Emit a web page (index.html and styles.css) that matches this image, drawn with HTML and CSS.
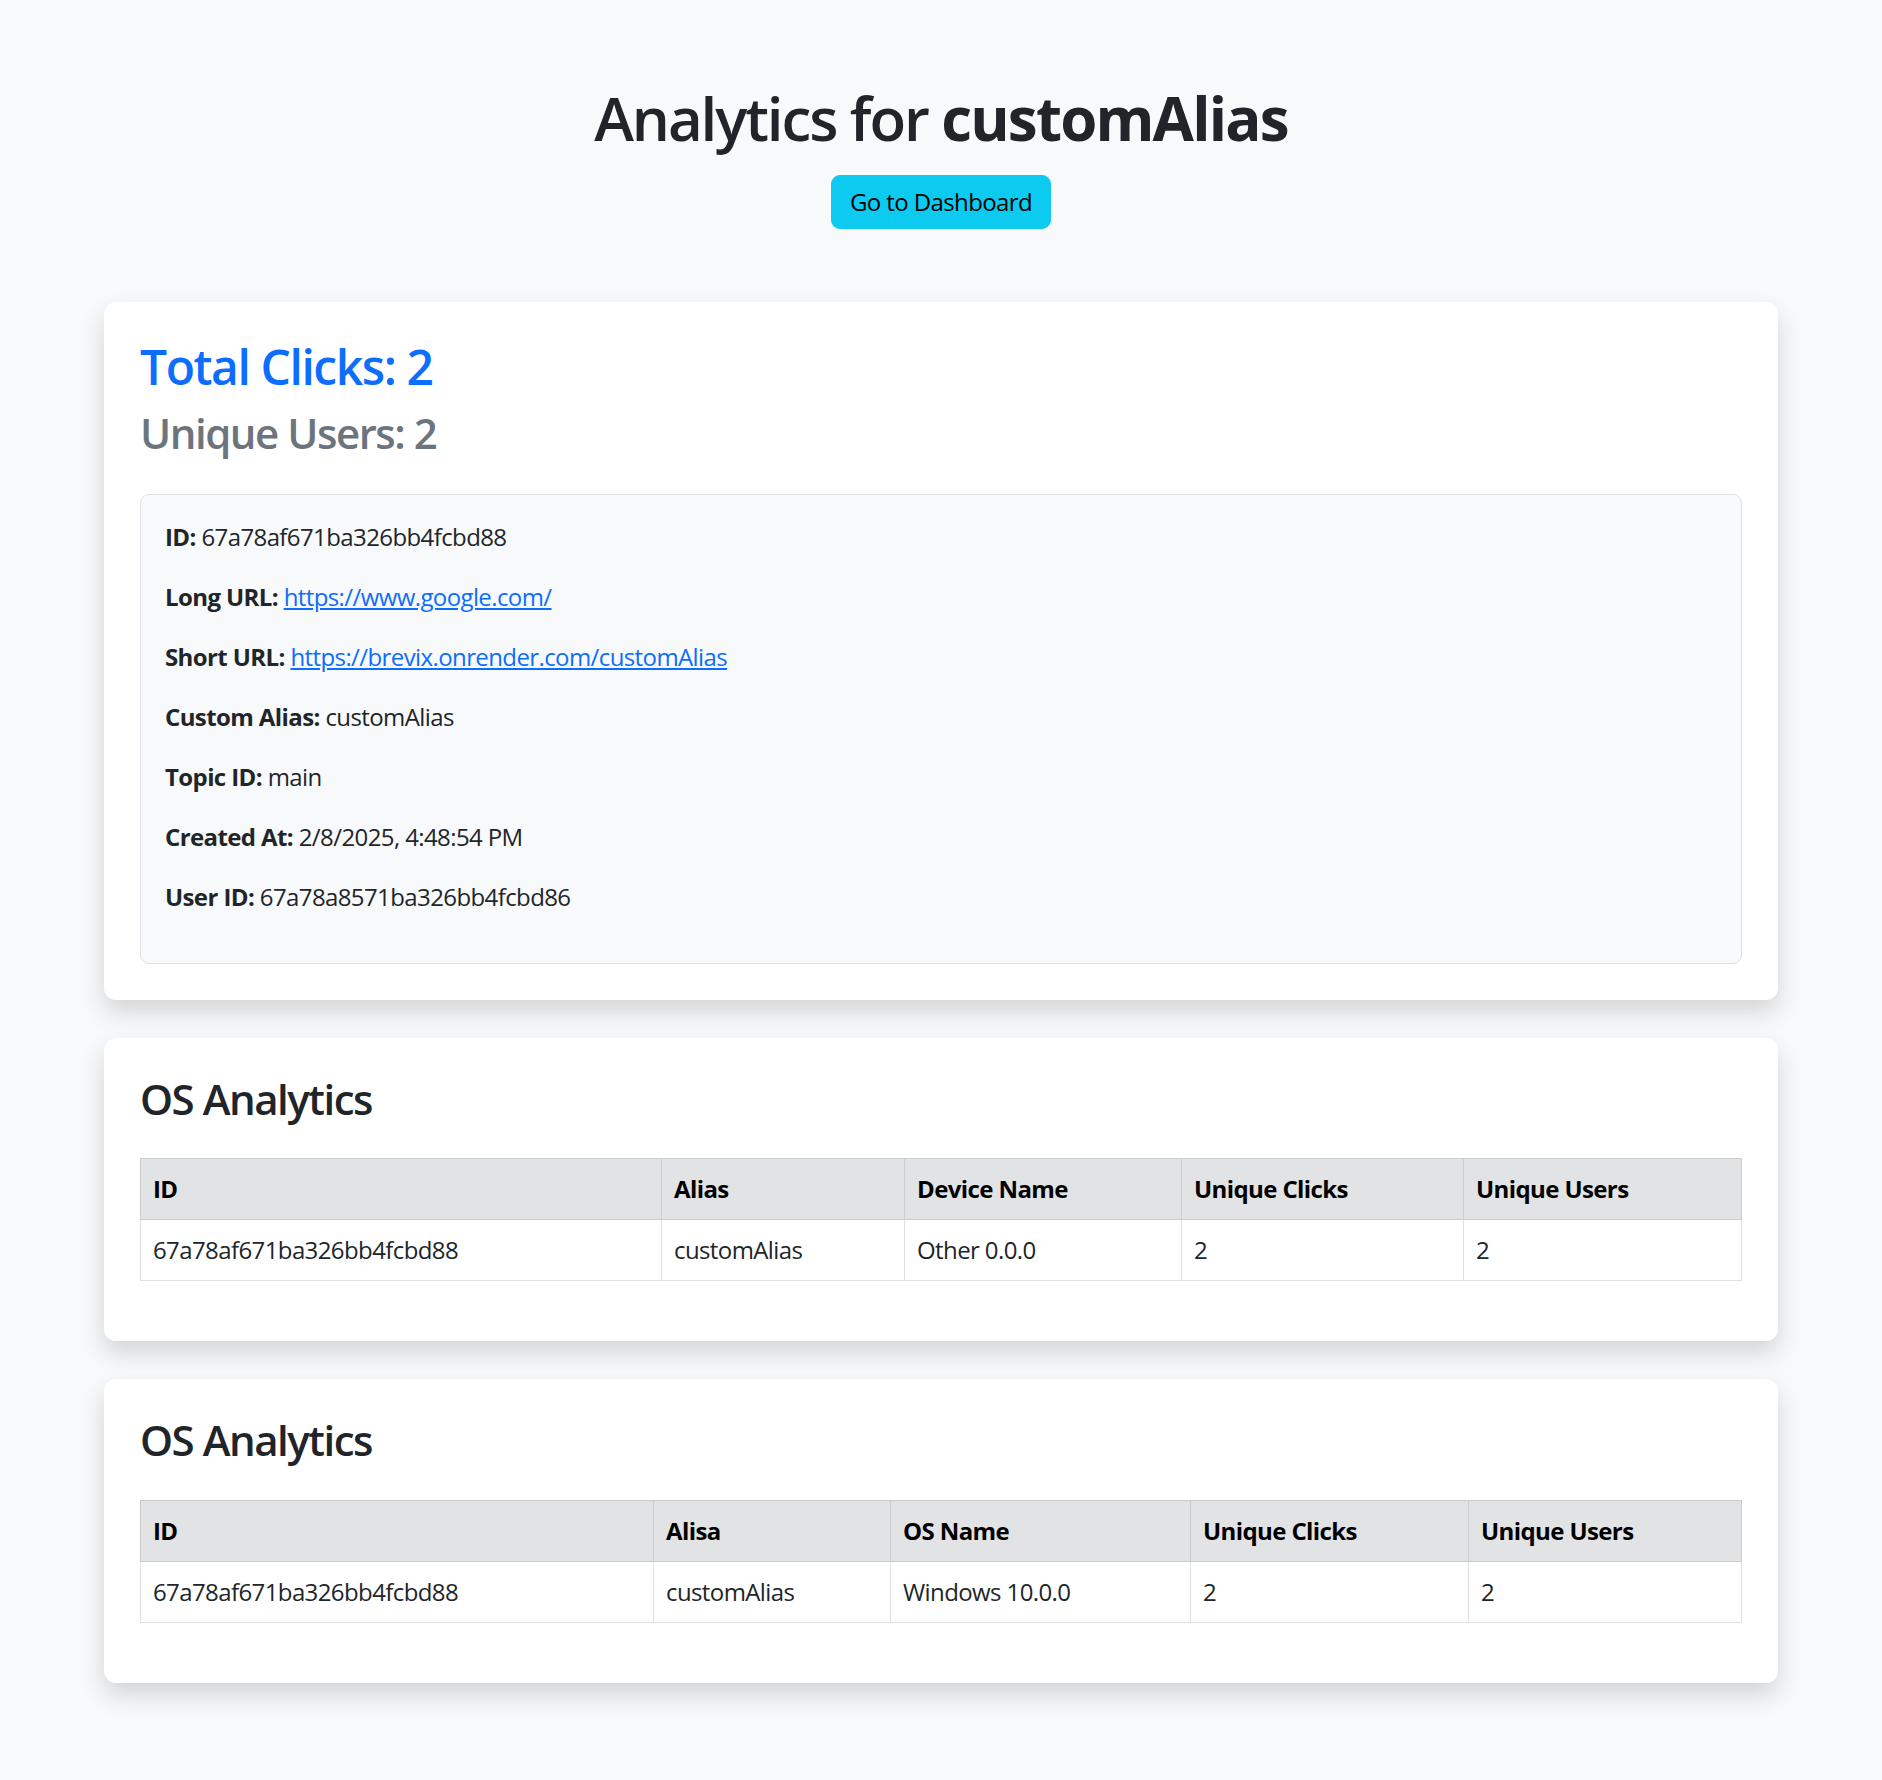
FILE: index.html
```html
<!DOCTYPE html>
<html lang="en">
<head>
<meta charset="utf-8">
<title>Analytics for customAlias</title>
<link rel="stylesheet" href="styles.css">
</head>
<body>
<div class="container">
  <header class="page-head">
    <h1 class="title">Analytics for <strong>customAlias</strong></h1>
    <a class="btn-info" href="#">Go to Dashboard</a>
  </header>

  <section class="card">
    <h2 class="total">Total Clicks: 2</h2>
    <h3 class="unique">Unique Users: 2</h3>
    <div class="details">
      <p><strong>ID:</strong> 67a78af671ba326bb4fcbd88</p>
      <p><strong>Long URL:</strong> <a href="#">https://www.google.com/</a></p>
      <p><strong>Short URL:</strong> <a href="#">https://brevix.onrender.com/customAlias</a></p>
      <p><strong>Custom Alias:</strong> customAlias</p>
      <p><strong>Topic ID:</strong> main</p>
      <p><strong>Created At:</strong> 2/8/2025, 4:48:54 PM</p>
      <p><strong>User ID:</strong> 67a78a8571ba326bb4fcbd86</p>
    </div>
  </section>

  <section class="card">
    <h3 class="section-title">OS Analytics</h3>
    <table class="data-table t-device">
      <thead>
        <tr><th class="c1">ID</th><th class="c2">Alias</th><th class="c3">Device Name</th><th class="c4">Unique Clicks</th><th class="c5">Unique Users</th></tr>
      </thead>
      <tbody>
        <tr><td>67a78af671ba326bb4fcbd88</td><td>customAlias</td><td>Other 0.0.0</td><td>2</td><td>2</td></tr>
      </tbody>
    </table>
  </section>

  <section class="card">
    <h3 class="section-title">OS Analytics</h3>
    <table class="data-table t-os">
      <thead>
        <tr><th class="c1">ID</th><th class="c2">Alisa</th><th class="c3">OS Name</th><th class="c4">Unique Clicks</th><th class="c5">Unique Users</th></tr>
      </thead>
      <tbody>
        <tr><td>67a78af671ba326bb4fcbd88</td><td>customAlias</td><td>Windows 10.0.0</td><td>2</td><td>2</td></tr>
      </tbody>
    </table>
  </section>
</div>
</body>
</html>
```

FILE: styles.css
```css
* { box-sizing: border-box; }

html, body {
  margin: 0;
  background: #f8f9fa;
}

body {
  font-family: "Open Sans", "Noto Sans", "Liberation Sans", sans-serif;
  font-size: 24px;
  line-height: 1.5;
  color: #212529;
  letter-spacing: -0.025em;
}

.container {
  width: 1674px;
  margin: 0 auto;
  padding-top: 82px;
  padding-bottom: 72px;
}

.page-head {
  display: flex;
  flex-direction: column;
  align-items: center;
  margin-bottom: 73px;
}

.title {
  margin: 0 0 21px;
  font-size: 60px;
  line-height: 72px;
  font-weight: 600;
  color: #212529;
  letter-spacing: -0.035em;
}

.title strong { font-weight: 700; letter-spacing: -0.03em; }

.btn-info {
  display: inline-block;
  padding: 8px 18px;
  line-height: 36px;
  font-size: 24px;
  color: #000;
  background: #0dcaf0;
  border: 1px solid #0dcaf0;
  border-radius: 9px;
  text-decoration: none;
}

.card {
  background: #fff;
  border-radius: 12px;
  box-shadow: 0 12px 24px rgba(0, 0, 0, 0.15);
  padding: 36px;
  margin-bottom: 38px;
}

.total {
  margin: 0 0 12px;
  font-size: 48px;
  line-height: 57.6px;
  font-weight: 600;
  color: #0d6efd;
  letter-spacing: -0.03em;
}

.unique {
  margin: 0 0 36px;
  font-size: 42px;
  line-height: 50.4px;
  font-weight: 600;
  color: #6c757d;
  letter-spacing: -0.035em;
}

.details {
  background: #f8f9fa;
  border: 1.5px solid #dee2e6;
  border-radius: 9px;
  padding: 24px;
}

.details p {
  margin: 0 0 24px;
  line-height: 36px;
}

.details strong { font-weight: 700; }

.details a {
  color: #0d6efd;
  text-decoration: underline;
}

.section-title {
  margin: 0 0 34px;
  font-size: 42px;
  line-height: 50.4px;
  font-weight: 600;
  color: #212529;
  letter-spacing: -0.035em;
}

.data-table {
  width: 100%;
  border-collapse: collapse;
  margin-bottom: 24px;
  table-layout: fixed;
}

.data-table th,
.data-table td {
  padding: 12px;
  line-height: 36px;
  text-align: left;
  vertical-align: top;
  border: 1px solid #dee2e6;
}

.data-table th {
  background: #e2e3e5;
  color: #000;
  font-weight: 700;
  border-color: #cbccce;
}

.data-table td { background: #fff; }

.t-device .c1 { width: 521px; }
.t-device .c2 { width: 243px; }
.t-device .c3 { width: 277px; }
.t-device .c4 { width: 282px; }
.t-device .c5 { width: 278px; }

.t-os .c1 { width: 513px; }
.t-os .c2 { width: 237px; }
.t-os .c3 { width: 300px; }
.t-os .c4 { width: 278px; }
.t-os .c5 { width: 273px; }
```
